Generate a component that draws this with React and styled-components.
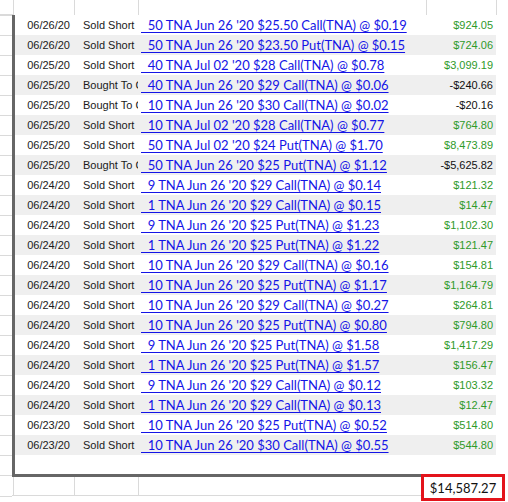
import styled, { createGlobalStyle } from "styled-components";

const GlobalStyle = createGlobalStyle`
  html, body {
    margin: 0;
    padding: 0;
    background: #ffffff;
  }
  body {
    font-family: "Liberation Sans", Arial, sans-serif;
  }
`;

const GRID = "#dadada";
const DARK = "#666666";

const trades = [
  ["06/26/20", "Sold Short", "50 TNA Jun 26 '20 $25.50 Call(TNA) @ $0.19", "$924.05"],
  ["06/26/20", "Sold Short", "50 TNA Jun 26 '20 $23.50 Put(TNA) @ $0.15", "$724.06"],
  ["06/25/20", "Sold Short", "40 TNA Jul 02 '20 $28 Call(TNA) @ $0.78", "$3,099.19"],
  ["06/25/20", "Bought To Close", "40 TNA Jun 26 '20 $29 Call(TNA) @ $0.06", "-$240.66"],
  ["06/25/20", "Bought To Close", "10 TNA Jun 26 '20 $30 Call(TNA) @ $0.02", "-$20.16"],
  ["06/25/20", "Sold Short", "10 TNA Jul 02 '20 $28 Call(TNA) @ $0.77", "$764.80"],
  ["06/25/20", "Sold Short", "50 TNA Jul 02 '20 $24 Put(TNA) @ $1.70", "$8,473.89"],
  ["06/25/20", "Bought To Close", "50 TNA Jun 26 '20 $25 Put(TNA) @ $1.12", "-$5,625.82"],
  ["06/24/20", "Sold Short", "9 TNA Jun 26 '20 $29 Call(TNA) @ $0.14", "$121.32"],
  ["06/24/20", "Sold Short", "1 TNA Jun 26 '20 $29 Call(TNA) @ $0.15", "$14.47"],
  ["06/24/20", "Sold Short", "9 TNA Jun 26 '20 $25 Put(TNA) @ $1.23", "$1,102.30"],
  ["06/24/20", "Sold Short", "1 TNA Jun 26 '20 $25 Put(TNA) @ $1.22", "$121.47"],
  ["06/24/20", "Sold Short", "10 TNA Jun 26 '20 $29 Call(TNA) @ $0.16", "$154.81"],
  ["06/24/20", "Sold Short", "10 TNA Jun 26 '20 $25 Put(TNA) @ $1.17", "$1,164.79"],
  ["06/24/20", "Sold Short", "10 TNA Jun 26 '20 $29 Call(TNA) @ $0.27", "$264.81"],
  ["06/24/20", "Sold Short", "10 TNA Jun 26 '20 $25 Put(TNA) @ $0.80", "$794.80"],
  ["06/24/20", "Sold Short", "9 TNA Jun 26 '20 $25 Put(TNA) @ $1.58", "$1,417.29"],
  ["06/24/20", "Sold Short", "1 TNA Jun 26 '20 $25 Put(TNA) @ $1.57", "$156.47"],
  ["06/24/20", "Sold Short", "9 TNA Jun 26 '20 $29 Call(TNA) @ $0.12", "$103.32"],
  ["06/24/20", "Sold Short", "1 TNA Jun 26 '20 $29 Call(TNA) @ $0.13", "$12.47"],
  ["06/23/20", "Sold Short", "10 TNA Jun 26 '20 $25 Put(TNA) @ $0.52", "$514.80"],
  ["06/23/20", "Sold Short", "10 TNA Jun 26 '20 $30 Call(TNA) @ $0.55", "$544.80"],
];

const Page = styled.div`
  width: 508px;
  height: 502px;
  display: flex;
  flex-direction: column;
  overflow: hidden;
`;

const HeaderStrip = styled.div`
  display: grid;
  grid-template-columns: 14px 61px 64px 288px 70px 1fr;
  height: 15px;
`;

const HeaderCell = styled.div`
  border-right: ${(p) => (p.$last ? "none" : `1px solid ${GRID}`)};
  border-bottom: ${(p) => (p.$first ? `1px solid ${GRID}` : "none")};
`;

const Body = styled.div`
  display: flex;
`;

const Gutter = styled.div`
  width: 12px;
  flex-shrink: 0;
  background: repeating-linear-gradient(
    to bottom,
    ${GRID} 0 1px,
    transparent 1px 20px
  );
`;

const Sheet = styled.div`
  flex: 1;
  border-left: 3px solid ${DARK};
  display: flex;
  flex-direction: column;
`;

const Row = styled.div`
  width: 481px;
  height: 20px;
  display: grid;
  grid-template-columns: 59px 64px 288px 70px;
  align-items: center;
  background: ${(p) => (p.$shaded ? "#efefef" : "#ffffff")};
`;

const DateCell = styled.div`
  font-size: 11px;
  color: #1a1a1a;
  text-align: right;
  padding-right: 4px;
`;

const TypeCell = styled.div`
  font-size: 11px;
  color: #1a1a1a;
  padding-left: 9px;
  white-space: nowrap;
  overflow: hidden;
`;

const LinkCell = styled.div`
  padding-left: 3px;
  white-space: pre;
  overflow: hidden;
`;

const TradeLink = styled.a`
  font-family: Lato, "Open Sans", sans-serif;
  font-size: 13px;
  color: #1414e6;
  text-decoration: underline;
  text-decoration-thickness: 1px;
  text-underline-offset: 2px;
  cursor: pointer;
`;

const AmountCell = styled.div`
  font-size: 11px;
  text-align: right;
  padding-right: 3px;
  color: ${(p) => (p.$negative ? "#111111" : "#2f9a2a")};
`;

const BlankRow = styled.div`
  height: 19px;
`;

const Footer = styled.div`
  display: flex;
  height: 28px;
`;

const FooterGutter = styled.div`
  width: 12px;
  flex-shrink: 0;
  border-top: 1px solid ${GRID};
  margin-top: 1px;
  height: 20px;
  border-bottom: 1px solid ${GRID};
`;

const FooterCells = styled.div`
  flex: 1;
  border-top: 3px solid ${DARK};
  display: grid;
  grid-template-columns: 2px 61px 64px 1fr;
  height: 19px;
`;

const FooterCell = styled.div`
  border-bottom: 1px solid ${GRID};
  border-right: ${(p) => (p.$last ? "none" : `1px solid ${GRID}`)};
`;

const TotalBox = styled.div`
  width: 84px;
  height: 27px;
  box-sizing: border-box;
  border: 3px solid #e3131b;
  margin-right: 3px;
  display: flex;
  align-items: center;
  justify-content: center;
  font-family: Lato, "Open Sans", sans-serif;
  font-size: 13px;
  color: #111111;
`;

export default function App() {
  return (
    <>
      <GlobalStyle />
      <Page>
        <HeaderStrip>
          <HeaderCell $first />
          <HeaderCell />
          <HeaderCell />
          <HeaderCell />
          <HeaderCell />
          <HeaderCell $last />
        </HeaderStrip>

        <Body>
          <Gutter />
          <Sheet>
            {trades.map(([date, type, label, amount], i) => (
              <Row key={i} $shaded={i % 2 === 1}>
                <DateCell>{date}</DateCell>
                <TypeCell>{type}</TypeCell>
                <LinkCell>
                  <TradeLink>{"  " + label}</TradeLink>
                </LinkCell>
                <AmountCell $negative={amount.startsWith("-")}>{amount}</AmountCell>
              </Row>
            ))}
            <BlankRow />
          </Sheet>
        </Body>

        <Footer>
          <FooterGutter />
          <FooterCells>
            <FooterCell />
            <FooterCell />
            <FooterCell />
            <FooterCell $last />
          </FooterCells>
          <TotalBox>$14,587.27</TotalBox>
        </Footer>
      </Page>
    </>
  );
}
